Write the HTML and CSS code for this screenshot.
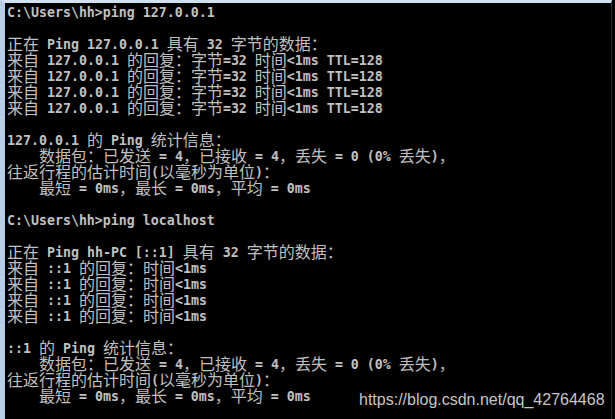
FILE: index.html
```html
<!DOCTYPE html>
<html lang="zh-CN">
<head>
<meta charset="utf-8">
<title>ping</title>
<link rel="stylesheet" href="styles.css">
</head>
<body>
<div class="win">
  <div class="console">
<div class="l">C:\Users\hh&gt;ping 127.0.0.1</div>
<div class="l"></div>
<div class="l"><span class="c">正在</span> Ping 127.0.0.1 <span class="c">具有</span> 32 <span class="c">字节的数据：</span></div>
<div class="l"><span class="c">来自</span> 127.0.0.1 <span class="c">的回复：字节</span>=32 <span class="c">时间</span>&lt;1ms TTL=128</div>
<div class="l"><span class="c">来自</span> 127.0.0.1 <span class="c">的回复：字节</span>=32 <span class="c">时间</span>&lt;1ms TTL=128</div>
<div class="l"><span class="c">来自</span> 127.0.0.1 <span class="c">的回复：字节</span>=32 <span class="c">时间</span>&lt;1ms TTL=128</div>
<div class="l"><span class="c">来自</span> 127.0.0.1 <span class="c">的回复：字节</span>=32 <span class="c">时间</span>&lt;1ms TTL=128</div>
<div class="l"></div>
<div class="l">127.0.0.1 <span class="c">的</span> Ping <span class="c">统计信息：</span></div>
<div class="l">    <span class="c">数据包：已发送</span> = 4<span class="c">，已接收</span> = 4<span class="c">，丢失</span> = 0 (0% <span class="c">丢失</span>)<span class="c">，</span></div>
<div class="l"><span class="c">往返行程的估计时间</span>(<span class="c">以毫秒为单位</span>)<span class="c">：</span></div>
<div class="l">    <span class="c">最短</span> = 0ms<span class="c">，最长</span> = 0ms<span class="c">，平均</span> = 0ms</div>
<div class="l"></div>
<div class="l">C:\Users\hh&gt;ping localhost</div>
<div class="l"></div>
<div class="l"><span class="c">正在</span> Ping hh-PC [::1] <span class="c">具有</span> 32 <span class="c">字节的数据：</span></div>
<div class="l"><span class="c">来自</span> ::1 <span class="c">的回复：时间</span>&lt;1ms</div>
<div class="l"><span class="c">来自</span> ::1 <span class="c">的回复：时间</span>&lt;1ms</div>
<div class="l"><span class="c">来自</span> ::1 <span class="c">的回复：时间</span>&lt;1ms</div>
<div class="l"><span class="c">来自</span> ::1 <span class="c">的回复：时间</span>&lt;1ms</div>
<div class="l"></div>
<div class="l">::1 <span class="c">的</span> Ping <span class="c">统计信息：</span></div>
<div class="l">    <span class="c">数据包：已发送</span> = 4<span class="c">，已接收</span> = 4<span class="c">，丢失</span> = 0 (0% <span class="c">丢失</span>)<span class="c">，</span></div>
<div class="l"><span class="c">往返行程的估计时间</span>(<span class="c">以毫秒为单位</span>)<span class="c">：</span></div>
<div class="l">    <span class="c">最短</span> = 0ms<span class="c">，最长</span> = 0ms<span class="c">，平均</span> = 0ms</div>
  </div>
</div>
<div class="mark">https://blog.csdn.net/qq_42764468</div>
</body>
</html>
```
FILE: styles.css
```css
html, body {
  margin: 0;
  padding: 0;
  background: #000;
}
body {
  width: 615px;
  height: 419px;
  overflow: hidden;
  position: relative;
}
.win {
  box-sizing: border-box;
  width: 612px;
  height: 419px;
  border-top: 3px solid #d3e0ee;
  border-left: 5px solid #b8cde6;
  border-right: 1px solid #2c2c2c;
  background: #000;
  padding: 2px 0 0 2px;
}
.console {
  color: #c0c0c0;
  font-family: "DejaVu Sans Mono", "Liberation Mono", monospace;
  font-weight: bold;
  font-size: 13.288px;
}
.l {
  height: 16px;
  line-height: 16px;
  white-space: pre;
}
.c {
  font-family: "Noto Sans CJK SC", sans-serif;
  font-weight: normal;
  font-size: 16px;
  line-height: 0;
  vertical-align: -1px;
}
.mark {
  position: absolute;
  left: 359px;
  top: 390px;
  font-family: "Liberation Sans", Arial, sans-serif;
  font-size: 16px;
  line-height: 20px;
  color: #c6c6c6;
}
```
